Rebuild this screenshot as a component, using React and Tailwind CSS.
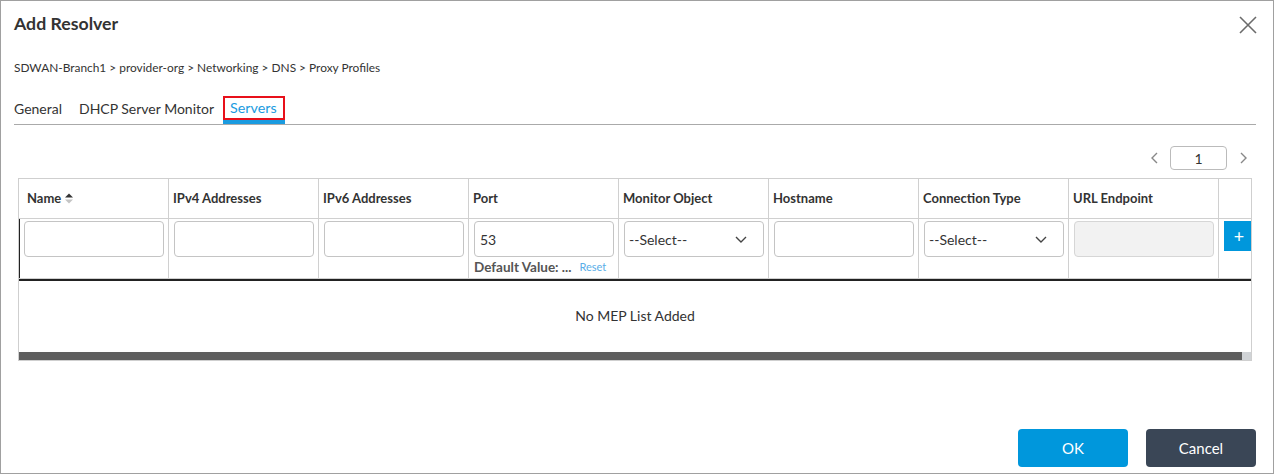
import React from 'react'

const COLUMNS = [
  { key: 'name', label: 'Name', sort: true },
  { key: 'ipv4', label: 'IPv4 Addresses' },
  { key: 'ipv6', label: 'IPv6 Addresses' },
  { key: 'port', label: 'Port' },
  { key: 'monitor', label: 'Monitor Object' },
  { key: 'hostname', label: 'Hostname' },
  { key: 'conn', label: 'Connection Type' },
  { key: 'url', label: 'URL Endpoint' }
]

const FONT = "font-['Lato','Liberation_Sans',sans-serif]"

function CloseIcon() {
  return (
    <svg width="18" height="18" viewBox="0 0 18 18" className="text-[#6b6b6b]">
      <path d="M1 1 L17 17 M17 1 L1 17" stroke="currentColor" strokeWidth="1.6" fill="none" />
    </svg>
  )
}

function Chevron({ dir = 'down', className = '' }) {
  const d = {
    down: 'M1 1 L6 6 L11 1',
    left: 'M6 1 L1 6 L6 11',
    right: 'M1 1 L6 6 L1 11'
  }[dir]
  const size = dir === 'down' ? { w: 12, h: 7 } : { w: 7, h: 12 }
  return (
    <svg width={size.w} height={size.h} viewBox={`0 0 ${size.w} ${size.h}`} className={className}>
      <path d={d} stroke="currentColor" strokeWidth="1.4" fill="none" />
    </svg>
  )
}

function SortIcon() {
  return (
    <svg width="8" height="11" viewBox="0 0 8 11" className="ml-[4px]">
      <path d="M0 4.5 L4 0.5 L8 4.5 Z" fill="#333" />
      <path d="M0 6.5 L4 10.5 L8 6.5 Z" fill="#c4c4c4" />
    </svg>
  )
}

function TextBox({ value, disabled }) {
  return (
    <div
      className={`h-[36px] w-full rounded-[4px] border px-[5px] flex items-center text-[14px] text-[#333] ${
        disabled ? 'bg-[#f2f2f2] border-[#d6d6d6]' : 'bg-white border-[#c4c4c4]'
      }`}
    >
      {value}
    </div>
  )
}

function SelectBox() {
  return (
    <div className="h-[36px] w-full rounded-[4px] border border-[#c4c4c4] bg-white pl-[4px] pr-[16px] flex items-center justify-between text-[14px] text-[#333]">
      <span>--Select--</span>
      <Chevron dir="down" className="text-[#444]" />
    </div>
  )
}

function InputCell({ col }) {
  return (
    <div className="w-[150px] shrink-0 border-r border-[#d0d0d0] pt-[2px] pl-[5px] pr-[4px]">
      {col.key === 'monitor' || col.key === 'conn' ? (
        <SelectBox />
      ) : (
        <TextBox value={col.key === 'port' ? '53' : ''} disabled={col.key === 'url'} />
      )}
      {col.key === 'port' && (
        <div className="mt-[1px] flex items-center leading-[18px]">
          <span className="text-[13.5px] font-bold text-[#555]">Default Value: ...</span>
          <span className="ml-[8px] text-[11px] text-[#5aaee8]">Reset</span>
        </div>
      )}
    </div>
  )
}

export default function App() {
  return (
    <div className={`${FONT} w-[1274px] h-[474px] border border-[#a0a0a0] bg-white flex flex-col pl-[13px] pr-[17px] text-[#333]`}>
      <div className="h-[47px] flex items-center justify-between">
        <div className="text-[17.7px] font-bold text-[#333]">Add Resolver</div>
        <div className="mr-[-1px]">
          <CloseIcon />
        </div>
      </div>

      <div className="mt-[12px] h-4 leading-4 text-[11.9px] text-[#333]">
        SDWAN-Branch1 &gt; provider-org &gt; Networking &gt; DNS &gt; Proxy Profiles
      </div>

      <div className="mt-[20px] flex h-[29px] border-b border-[#aaa] text-[14px]">
        <div className="flex h-[24px] items-center">General</div>
        <div className="ml-[17px] flex h-[24px] items-center">DHCP Server Monitor</div>
        <div className="ml-[9px] flex flex-col">
          <div className="flex h-[24px] items-center border-2 border-[#e8101a] pl-[5px] pr-[6px] text-[14.3px] text-[#1a9be0]">
            Servers
          </div>
          <div className="h-[4px] bg-[#1a9be0]" />
        </div>
      </div>

      <div className="mt-[21px] flex h-[24px] items-center justify-end pr-[9px]">
        <Chevron dir="left" className="text-[#888]" />
        <div className="ml-[12px] mr-[13px] flex h-[24px] w-[57px] items-center justify-center rounded-[4px] border border-[#bbb] text-[14px]">
          1
        </div>
        <Chevron dir="right" className="text-[#888]" />
      </div>

      <div className="mx-1 mt-[8px] border border-[#cfcfcf]">
        <div className="flex h-[40px] border-b border-[#d0d0d0]">
          {COLUMNS.map((c, i) => (
            <div
              key={c.key}
              className={`w-[150px] shrink-0 border-r border-[#d0d0d0] pr-1 flex items-center text-[13px] font-bold text-[#333] ${
                i === 0 ? 'pl-[8px]' : 'pl-[4px]'
              }`}
            >
              {c.label}
              {c.sort && <SortIcon />}
            </div>
          ))}
          <div className="w-[32px] shrink-0" />
        </div>

        <div className="flex h-[59px] shadow-[inset_1px_0_0_#222]">
          {COLUMNS.map((c) => (
            <InputCell key={c.key} col={c} />
          ))}
          <div className="w-[32px] shrink-0 overflow-hidden pt-[2px] pl-[5px]">
            <div className="flex h-[30px] w-[30px] items-center justify-center bg-[#0097dc] text-[18px] leading-none text-white">
              +
            </div>
          </div>
        </div>
        <div className="h-[1px] bg-[#d0d0d0]" />
        <div className="h-[2px] bg-[#222]" />

        <div className="flex h-[71px] items-center justify-center pb-[2px] text-[14px] text-[#333]">
          No MEP List Added
        </div>

        <div className="flex h-[8px]">
          <div className="flex-1 bg-[#5e5e5e]" />
          <div className="w-[9px] bg-[#d0d3d6]" />
        </div>
      </div>

      <div className="mt-auto mb-[6px] flex justify-end gap-[18px]">
        <button className="h-[38px] w-[110px] rounded-[4px] bg-[#0097dc] text-[15px] text-white">OK</button>
        <button className="h-[38px] w-[110px] rounded-[4px] bg-[#3a4656] text-[15px] text-white">Cancel</button>
      </div>
    </div>
  )
}
